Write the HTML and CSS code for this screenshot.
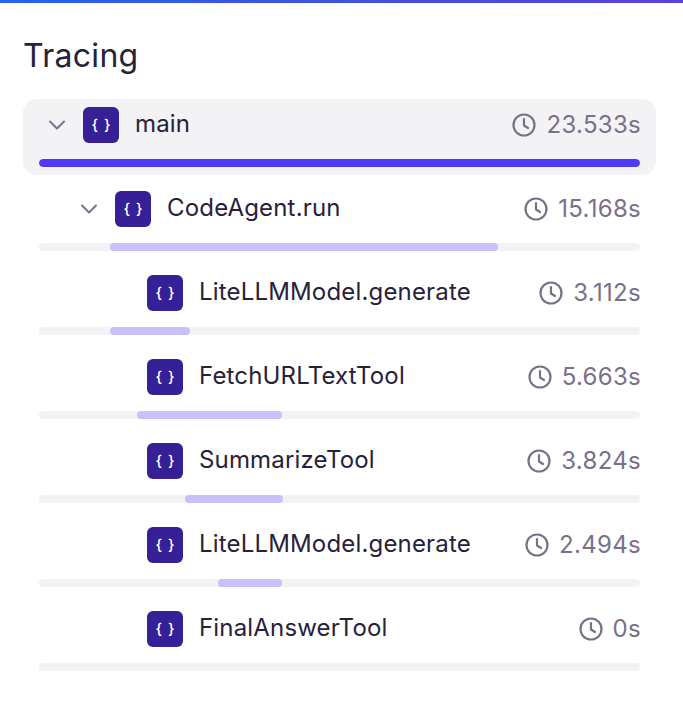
FILE: index.html

```html
<!DOCTYPE html>
<html>
    <head>
        <meta charset="UTF-8">
        <title>Tracing</title>
        <link rel="stylesheet" href="styles.css">
    </head>
    <body>
        <div class="topline"></div>
        <div class="container">
            <h1>Tracing</h1>
            <div class="tree">
                <div class="span active">
                    <div class="head depth0">
                        <svg class="chevron" viewBox="0 0 24 24"><path d="M5 8.5l7 7 7-7"/></svg>
                        <div class="badge">{ }</div>
                        <div class="name">main</div>
                        <svg class="clock" viewBox="0 0 24 24"><circle cx="12" cy="12" r="10.5"/><path d="M12 6v6.5l4 2.5"/></svg>
                        <div class="time">23.533s</div>
                    </div>
                    <div class="track"><div class="fill main" style="width: 100%"></div></div>
                </div>
                <div class="span">
                    <div class="head depth1">
                        <svg class="chevron" viewBox="0 0 24 24"><path d="M5 8.5l7 7 7-7"/></svg>
                        <div class="badge">{ }</div>
                        <div class="name">CodeAgent.run</div>
                        <svg class="clock" viewBox="0 0 24 24"><circle cx="12" cy="12" r="10.5"/><path d="M12 6v6.5l4 2.5"/></svg>
                        <div class="time">15.168s</div>
                    </div>
                    <div class="track"><div class="fill" style="margin-left: 11.8%; width: 64.5%"></div></div>
                </div>
                <div class="span">
                    <div class="head depth2">
                        <div class="badge">{ }</div>
                        <div class="name">LiteLLMModel.generate</div>
                        <svg class="clock" viewBox="0 0 24 24"><circle cx="12" cy="12" r="10.5"/><path d="M12 6v6.5l4 2.5"/></svg>
                        <div class="time">3.112s</div>
                    </div>
                    <div class="track"><div class="fill" style="margin-left: 11.8%; width: 13.3%"></div></div>
                </div>
                <div class="span">
                    <div class="head depth2">
                        <div class="badge">{ }</div>
                        <div class="name">FetchURLTextTool</div>
                        <svg class="clock" viewBox="0 0 24 24"><circle cx="12" cy="12" r="10.5"/><path d="M12 6v6.5l4 2.5"/></svg>
                        <div class="time">5.663s</div>
                    </div>
                    <div class="track"><div class="fill" style="margin-left: 16.3%; width: 24.1%"></div></div>
                </div>
                <div class="span">
                    <div class="head depth2">
                        <div class="badge">{ }</div>
                        <div class="name">SummarizeTool</div>
                        <svg class="clock" viewBox="0 0 24 24"><circle cx="12" cy="12" r="10.5"/><path d="M12 6v6.5l4 2.5"/></svg>
                        <div class="time">3.824s</div>
                    </div>
                    <div class="track"><div class="fill" style="margin-left: 24.3%; width: 16.3%"></div></div>
                </div>
                <div class="span">
                    <div class="head depth2">
                        <div class="badge">{ }</div>
                        <div class="name">LiteLLMModel.generate</div>
                        <svg class="clock" viewBox="0 0 24 24"><circle cx="12" cy="12" r="10.5"/><path d="M12 6v6.5l4 2.5"/></svg>
                        <div class="time">2.494s</div>
                    </div>
                    <div class="track"><div class="fill" style="margin-left: 29.8%; width: 10.6%"></div></div>
                </div>
                <div class="span">
                    <div class="head depth2">
                        <div class="badge">{ }</div>
                        <div class="name">FinalAnswerTool</div>
                        <svg class="clock" viewBox="0 0 24 24"><circle cx="12" cy="12" r="10.5"/><path d="M12 6v6.5l4 2.5"/></svg>
                        <div class="time">0s</div>
                    </div>
                    <div class="track"></div>
                </div>
            </div>
        </div>
    </body>
</html>
```

FILE: styles.css

```css
* { margin: 0; padding: 0; box-sizing: border-box; }
html, body { height: 100%; background: #fff; font-family: Inter, "Noto Sans", sans-serif; color: #27213a; }
.topline { height: 3px; background: linear-gradient(90deg, #2563eb, #5b3fd9); }
.container { padding: 33px 27px 0 23px; }
h1 { font-size: 32px; font-weight: 400; line-height: 40px; letter-spacing: 0.3px; margin-bottom: 23px; }
.tree { display: flex; flex-direction: column; gap: 8px; }
.span { height: 76px; padding: 8px 16px; border-radius: 14px; }
.span.active { background: #f3f3f6; }
.head { display: flex; align-items: center; height: 36px; margin-bottom: 16px; }
.depth0 { padding-left: 6px; }
.depth1 { padding-left: 38px; }
.depth2 { padding-left: 108px; }
.chevron { width: 24px; height: 24px; margin-right: 14px; flex: none; fill: none; stroke: #7a7089; stroke-width: 2; stroke-linecap: round; stroke-linejoin: round; }
.badge { width: 36px; height: 36px; flex: none; margin-right: 16px; border-radius: 6px; background: #352195; color: #fff; font-size: 15px; font-weight: 500; word-spacing: 2px; line-height: 35px; text-align: center; }
.name { flex: 1; font-size: 24px; line-height: 32px; letter-spacing: 0.17px; margin-top: -2px; }
.clock { width: 24px; height: 24px; margin-right: 10px; flex: none; fill: none; stroke: #7a7089; stroke-width: 2.2; stroke-linecap: round; stroke-linejoin: round; }
.time { font-size: 24px; line-height: 32px; letter-spacing: 0.3px; margin-right: -1px; color: #7a7089; }
.track { height: 8px; border-radius: 4px; background: #f3f3f6; overflow: hidden; }
.fill { height: 8px; border-radius: 4px; background: #c9c0fb; }
.fill.main { background: #5239f5; }
```
